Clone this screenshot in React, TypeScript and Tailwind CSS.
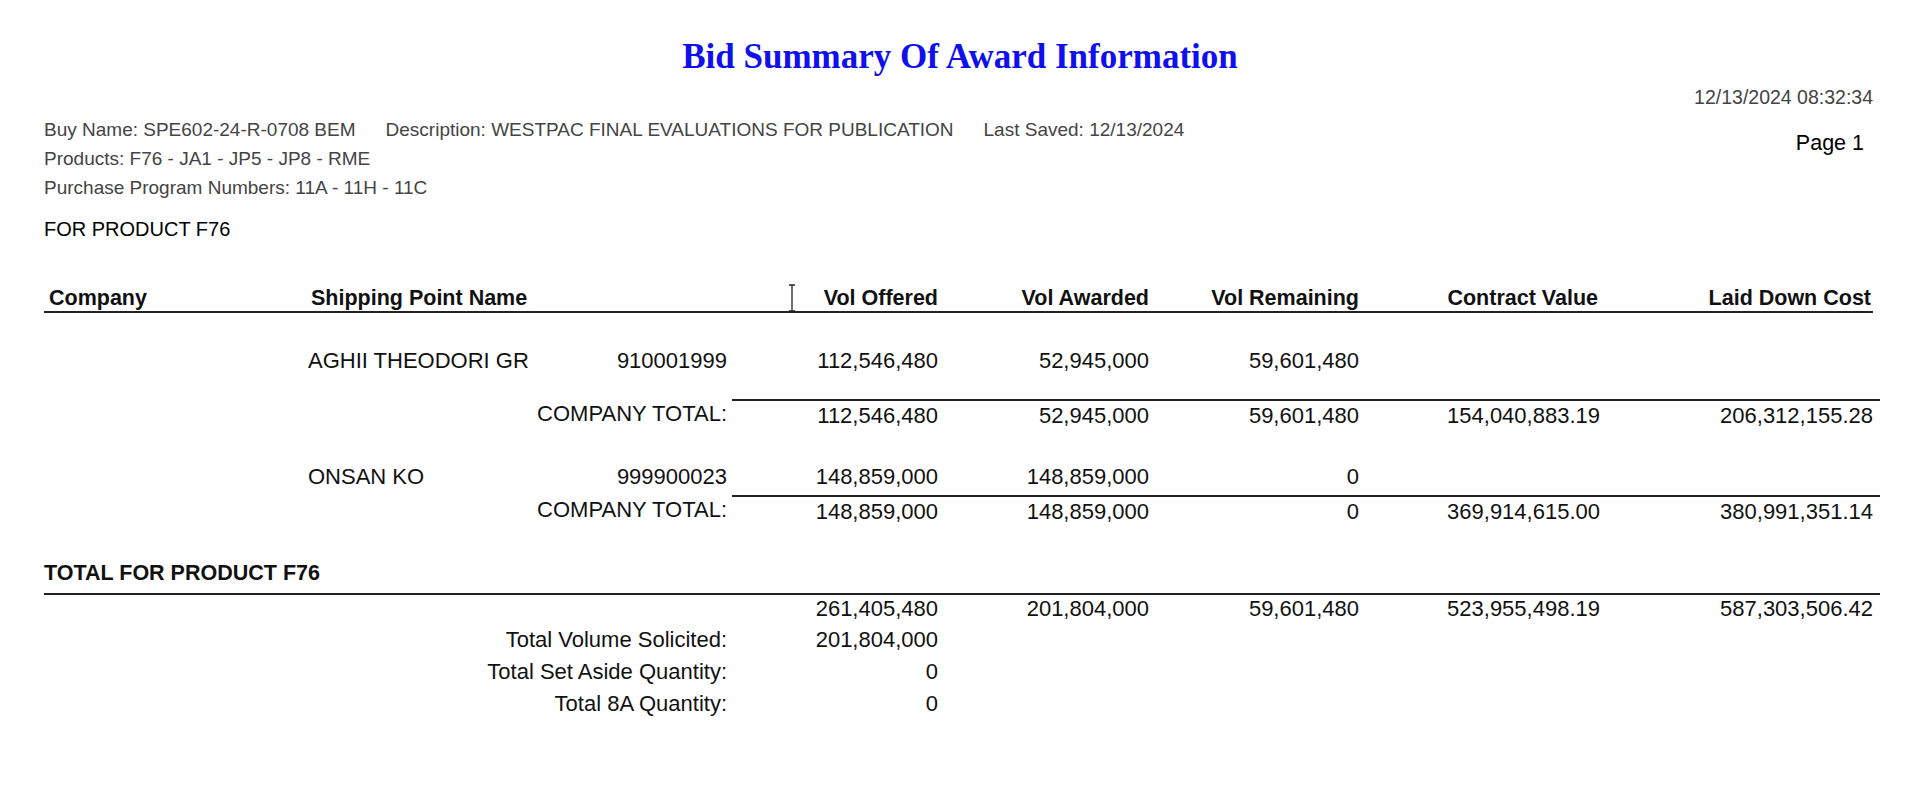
import React from "react";

const cols = "grid grid-cols-[688px_206px_211px_210px_241px_280px]";

function Row({ cells, className = "" }: { cells: React.ReactNode[]; className?: string }) {
  return (
    <div className={`${cols} ${className}`}>
      {cells.map((c, i) => (
        <div key={i} className={i === 0 ? "" : i === 5 ? "text-right pr-[7px]" : "text-right"}>
          {c}
        </div>
      ))}
    </div>
  );
}

function TotalRow({ label, vals, mt }: { label: string; vals: string[]; mt: string }) {
  return (
    <div className={`${cols} ${mt}`}>
      <div className="text-right pr-[5px] pt-[3px]">{label}</div>
      {vals.map((v, i) => (
        <div key={i} className={`border-t-2 border-[#222] pt-[3px] text-right ${i === 4 ? "pr-[7px]" : ""}`}>
          {v}
        </div>
      ))}
    </div>
  );
}

export default function App() {
  return (
    <div className="w-[1920px] h-[794px] bg-white overflow-hidden text-[#111] font-[Liberation_Sans,Arial,sans-serif]">
      <div className="pt-[37px] h-[40px] box-content text-center font-[Liberation_Serif,serif] font-bold text-[35px] leading-[40px] text-[#1010ee]">
        Bid Summary Of Award Information
      </div>
      <div className="mt-[9px] h-[22px] leading-[22px] text-right pr-[47px] text-[19.5px] text-[#444]">
        12/13/2024 08:32:34
      </div>
      <div className="mt-[7px] flex justify-between pl-[44px] pr-[56px]">
        <div className="text-[19px] leading-[29px] text-[#444]">
          <div className="flex gap-[30px]">
            <span>Buy Name: SPE602-24-R-0708 BEM</span>
            <span>Description: WESTPAC FINAL EVALUATIONS FOR PUBLICATION</span>
            <span>Last Saved: 12/13/2024</span>
          </div>
          <div>Products: F76 - JA1 - JP5 - JP8 - RME</div>
          <div>Purchase Program Numbers: 11A - 11H - 11C</div>
        </div>
        <div className="mt-[16px] text-[21.5px] leading-[24px] text-black">Page 1</div>
      </div>
      <div className="pl-[44px] text-[20px] leading-[24px]">
        <div className="mt-[15px] text-black">FOR PRODUCT F76</div>

        <div className="w-[1836px] text-[22px] leading-[24px]">
          <div className="mt-[45px] h-[27px] border-b-2 border-[#222] w-[1829px] font-bold text-[21.5px]">
            <div className={cols}>
              <div className="flex">
                <span className="pl-[5px] w-[267px]">Company</span>
                <span>Shipping Point Name</span>
              </div>
              <div className="text-right relative">
                <svg className="absolute left-[56px] top-[-2px]" width="8" height="28" viewBox="0 0 8 28">
                  <path d="M1 1h6M4 1v26M1 27h6" stroke="#222" strokeWidth="1.3" fill="none" />
                </svg>
                Vol Offered
              </div>
              <div className="text-right">Vol Awarded</div>
              <div className="text-right">Vol Remaining</div>
              <div className="text-right pr-[2px]">Contract Value</div>
              <div className="text-right pr-[9px]">Laid Down Cost</div>
            </div>
          </div>

          <Row
            className="mt-[36px]"
            cells={[
              <div className="flex pl-[264px] pr-[5px] justify-between">
                <span>AGHII THEODORI GR</span>
                <span>910001999</span>
              </div>,
              "112,546,480",
              "52,945,000",
              "59,601,480",
              "",
              "",
            ]}
          />
          <TotalRow
            mt="mt-[26px]"
            label="COMPANY TOTAL:"
            vals={["112,546,480", "52,945,000", "59,601,480", "154,040,883.19", "206,312,155.28"]}
          />

          <Row
            className="mt-[37px]"
            cells={[
              <div className="flex pl-[264px] pr-[5px] justify-between">
                <span>ONSAN KO</span>
                <span>999900023</span>
              </div>,
              "148,859,000",
              "148,859,000",
              "0",
              "",
              "",
            ]}
          />
          <TotalRow
            mt="mt-[6px]"
            label="COMPANY TOTAL:"
            vals={["148,859,000", "148,859,000", "0", "369,914,615.00", "380,991,351.14"]}
          />

          <div className="mt-[37px] font-bold text-[21.5px] border-b-2 border-[#222] pb-[8px]">TOTAL FOR PRODUCT F76</div>
          <Row
            className="pt-[2px]"
            cells={["", "261,405,480", "201,804,000", "59,601,480", "523,955,498.19", "587,303,506.42"]}
          />
          <div className="mt-[3px] leading-[32px]">
            {[
              ["Total Volume Solicited:", "201,804,000"],
              ["Total Set Aside Quantity:", "0"],
              ["Total 8A Quantity:", "0"],
            ].map(([l, v]) => (
              <div key={l} className={cols}>
                <div className="text-right pr-[5px]">{l}</div>
                <div className="text-right">{v}</div>
              </div>
            ))}
          </div>
        </div>
      </div>
    </div>
  );
}
